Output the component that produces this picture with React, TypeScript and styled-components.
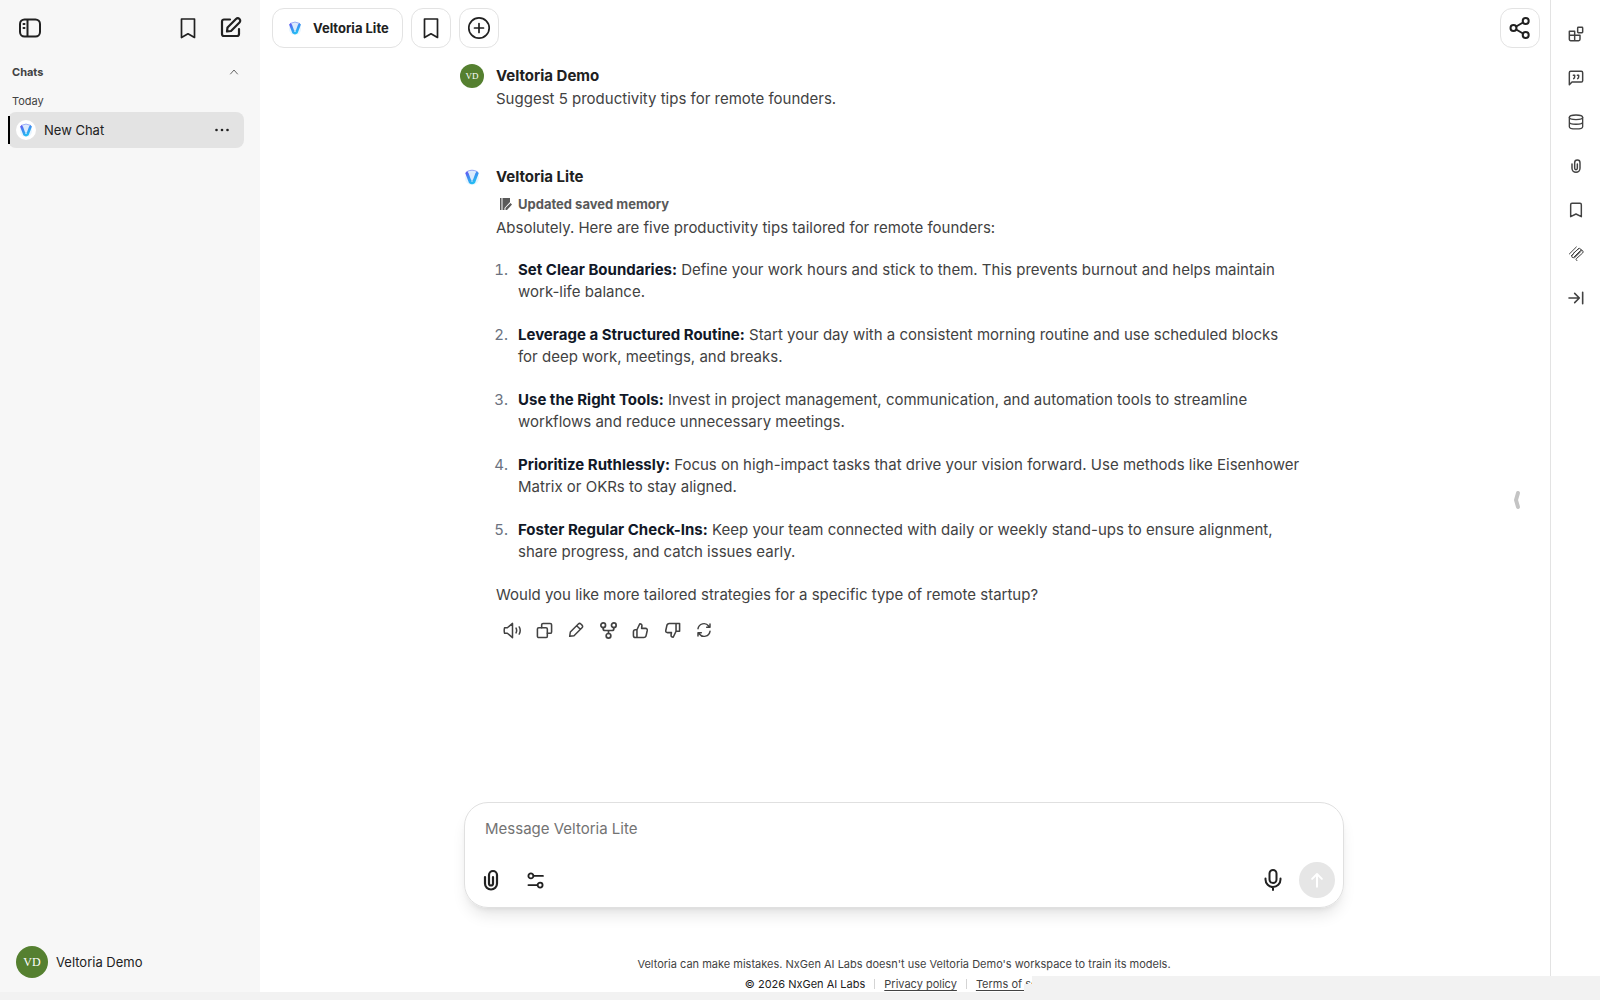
import React from "react";
import styled, { createGlobalStyle } from "styled-components";

const Global = createGlobalStyle`
  *, *::before, *::after { box-sizing: border-box; }
  html, body, #root { height: 100%; margin: 0; }
  body { font-family: Inter, "Liberation Sans", sans-serif; color: #212121; background: #f2f2f2; overflow: hidden; }
  button { font: inherit; color: inherit; border: 0; padding: 0; background: none; cursor: pointer; }
  svg { display: block; flex: none; }
`;

const Page = styled.div`
  height: 100vh;
  padding-bottom: 8px;
  position: relative;
`;
const Shell = styled.div`
  display: flex;
  height: 100%;
  background: #fff;
`;
const Sidebar = styled.nav`
  width: 260px;
  flex: none;
  display: flex;
  flex-direction: column;
  background: #f7f7f7;
`;
const SideTop = styled.div`
  display: flex;
  align-items: center;
  height: 56px;
  padding: 0 17px 0 18px;
  gap: 19px;
`;
const IconButton = styled.button<{ $size?: number; $push?: boolean }>`
  display: flex;
  align-items: center;
  justify-content: center;
  width: ${(p) => p.$size || 24}px;
  height: ${(p) => p.$size || 24}px;
  margin-right: ${(p) => (p.$push ? "auto" : 0)};
`;
const GroupButton = styled.button`
  display: flex;
  align-items: center;
  justify-content: space-between;
  height: 32px;
  padding: 0 20px 0 12px;
  font-size: 11px;
  font-weight: 700;
  color: #424242;
`;
const Period = styled.h2`
  margin: 0;
  padding: 6px 12px 3px;
  font-size: 11px;
  line-height: 15px;
  font-weight: 400;
  color: #424242;
`;
const ChatRow = styled.div`
  display: flex;
  align-items: center;
  height: 36px;
  margin: 0 16px 0 8px;
  padding-right: 14px;
  border-radius: 8px;
  background: #e3e3e3;
  &::before { content: ""; width: 2px; height: 28px; background: #000; margin-right: 6px; }
`;
const ChatLink = styled.a`
  display: flex;
  align-items: center;
  gap: 8px;
  flex: 1;
  font-size: 13px;
  color: #212121;
  text-decoration: none;
`;
const LogoDisc = styled.span`
  display: flex;
  align-items: center;
  justify-content: center;
  width: 20px;
  height: 20px;
  border-radius: 50%;
  background: #fff;
`;
const Account = styled.button`
  display: flex;
  align-items: center;
  gap: 8px;
  margin-top: auto;
  padding: 0 16px 14px;
  font-size: 13px;
`;
const Avatar = styled.span<{ $size: number }>`
  display: flex;
  align-items: center;
  justify-content: center;
  flex: none;
  width: ${(p) => p.$size}px;
  height: ${(p) => p.$size}px;
  border-radius: 50%;
  background: #558030;
  color: #fff;
  font-family: "Liberation Serif", serif;
  font-size: ${(p) => (p.$size > 24 ? 12 : 9)}px;
`;
const Main = styled.main`
  flex: 1;
  min-width: 0;
  display: flex;
  flex-direction: column;
  position: relative;
`;
const TopBar = styled.header`
  display: flex;
  align-items: center;
  gap: 8px;
  height: 56px;
  flex: none;
  padding: 0 10px 0 12px;
`;
const BarButton = styled.button<{ $wide?: boolean; $end?: boolean }>`
  display: flex;
  align-items: center;
  justify-content: center;
  gap: 8px;
  height: 40px;
  width: ${(p) => (p.$wide ? "auto" : "40px")};
  padding: ${(p) => (p.$wide ? "0 13px 0 12px" : "0")};
  margin-left: ${(p) => (p.$end ? "auto" : 0)};
  border: 1px solid #e3e3e3;
  border-radius: 12px;
  background: #fff;
  font-size: 13px;
  font-weight: 700;
`;
const Column = styled.div`
  flex: 1;
  display: flex;
  flex-direction: column;
  padding: 0 22px 0 20px;
`;
const Thread = styled.section`
  flex: 1;
  width: 100%;
  max-width: 888px;
  margin: 0 auto;
  padding-top: 9px;
`;
const Message = styled.article`
  display: grid;
  grid-template-columns: 24px minmax(0, 1fr);
  column-gap: 12px;
  margin-bottom: 56px;
  padding-right: 47px;
`;
const MessageIcon = styled.div`
  display: flex;
  align-items: center;
  justify-content: center;
  height: 22px;
`;
const Author = styled.h3`
  margin: 0;
  font-size: 15px;
  line-height: 22px;
  font-weight: 700;
`;
const Text = styled.p`
  margin: 0;
  font-size: 15px;
  line-height: 23px;
  color: #424242;
`;
const Memory = styled.button`
  display: flex;
  align-items: center;
  gap: 6px;
  height: 20px;
  margin: 6px 0 2px;
  padding-left: 3px;
  font-size: 13px;
  font-weight: 700;
  color: #595959;
`;
const Tips = styled.ol`
  margin: 20px 0;
  padding-left: 16px;
  font-size: 15px;
  line-height: 22px;
  color: #424242;
  li { padding-left: 6px; }
  li + li { margin-top: 21px; }
  li::marker { color: #6b7280; }
  strong { font-weight: 700; color: #111827; }
`;
const Actions = styled.div`
  display: flex;
  gap: 8px;
  margin-top: 12px;
  padding-left: 4px;
  color: #424242;
`;
const Composer = styled.form`
  width: 100%;
  max-width: 880px;
  margin: 0 auto;
  height: 106px;
  flex: none;
  display: flex;
  flex-direction: column;
  justify-content: space-between;
  padding: 12px 8px 9px 14px;
  border: 1px solid #e0e0e0;
  border-radius: 24px;
  box-shadow: 0 10px 15px -3px rgba(0,0,0,.1), 0 4px 6px -4px rgba(0,0,0,.1);
`;
const Prompt = styled.textarea`
  border: 0;
  outline: 0;
  resize: none;
  background: none;
  height: 28px;
  padding: 3px 6px;
  font: 15px/22px Inter, "Liberation Sans", sans-serif;
  &::placeholder { color: #737373; opacity: 1; }
`;
const Tools = styled.div`
  display: flex;
  align-items: center;
  gap: 20px;
`;
const Send = styled.button`
  display: flex;
  align-items: center;
  justify-content: center;
  width: 36px;
  height: 36px;
  border-radius: 50%;
  background: #e6e6e6;
  color: #fff;
`;
const ToolsEnd = styled.div`
  display: flex;
  align-items: center;
  gap: 14px;
  margin-left: auto;
`;
const Footer = styled.footer`
  flex: none;
  height: 84px;
  padding-top: 46px;
  text-align: center;
  font-size: 11px;
  line-height: 20px;
  color: #424242;
`;
const Legal = styled.div`
  display: flex;
  align-items: center;
  justify-content: center;
  color: #212121;
  a { color: #424242; text-underline-offset: 2px; }
`;
const Divider = styled.span`
  width: 1px;
  height: 10px;
  margin: 0 9px;
  background: #d4d4d4;
`;
const Rail = styled.aside`
  width: 50px;
  flex: none;
  display: flex;
  flex-direction: column;
  align-items: center;
  gap: 20px;
  padding-top: 22px;
  border-left: 1px solid #e3e3e3;
  color: #424242;
`;
const PanelHandle = styled.button`
  position: absolute;
  right: 28px;
  top: 490px;
  width: 10px;
  height: 20px;
`;
const StatusBubble = styled.div`
  position: absolute;
  right: 0;
  bottom: 8px;
  width: calc(100% - 1032px);
  height: 16px;
  background: #f2f2f2;
  &::before {
    content: "";
    position: absolute;
    right: 100%;
    bottom: 0;
    width: 8px;
    height: 8px;
    background: #f2f2f2;
  }
`;

type IconProps = { size?: number; w?: number; children: React.ReactNode };
const Icon = ({ size = 24, w = 2, children }: IconProps) => (
  <svg width={size} height={size} viewBox="0 0 24 24" fill="none" stroke="currentColor" strokeWidth={w} strokeLinecap="round" strokeLinejoin="round" aria-hidden="true">
    {children}
  </svg>
);

const Logo = ({ id, size = 16 }: { id: string; size?: number }) => (
  <svg width={size} height={size} viewBox="0 0 16 16" aria-hidden="true">
    <defs>
      <linearGradient id={id} x1="0" y1="0" x2=".6" y2="1">
        <stop offset="0" stopColor="#6a4df5" />
        <stop offset=".45" stopColor="#3f8cf0" />
        <stop offset="1" stopColor="#20c4f4" />
      </linearGradient>
    </defs>
    <circle cx="8" cy="9" r="7" fill="#e9f5ff" />
    <path d="M3 2.600Q8-.2 13 2.600L9.500 14H6.500Z" fill="#dcebfd" />
    <path d="M2.500 2.800Q8-.4 13.500 2.800" fill="none" stroke="#8a9cf3" strokeWidth=".9" />
    <path d="M1.200 4 3.200 2.200 4.600 4.200 6.800 10.200Q8 12.500 9.200 10.200L11.400 4.200 12.800 2.200 14.800 4 11 14Q8 16.600 5 14Z" fill={`url(#${id})`} />
    <path d="M6.800 12.500 8 10.800 9.200 12.500Z" fill="#bfe9fc" />
  </svg>
);

const Clip = ({ size = 24, w = 2 }: { size?: number; w?: number }) => (
  <Icon size={size} w={w}>
    <path d="M6 9v6.500a6 6 0 0 0 12 0V7a4 4 0 0 0-8 0v8.500a2 2 0 0 0 4 0V9" />
  </Icon>
);
const BookmarkShape = () => <path d="M5.500 3h13v18.500L12 17.800 5.500 21.500Z" />;

const tips = [
  ["Set Clear Boundaries:", "Define your work hours and stick to them. This prevents burnout and helps maintain work-life balance."],
  ["Leverage a Structured Routine:", "Start your day with a consistent morning routine and use scheduled blocks for deep work, meetings, and breaks."],
  ["Use the Right Tools:", "Invest in project management, communication, and automation tools to streamline workflows and reduce unnecessary meetings."],
  ["Prioritize Ruthlessly:", "Focus on high-impact tasks that drive your vision forward. Use methods like Eisenhower Matrix or OKRs to stay aligned."],
  ["Foster Regular Check-Ins:", "Keep your team connected with daily or weekly stand-ups to ensure alignment, share progress, and catch issues early."],
];

const actions: [string, React.ReactNode][] = [
  ["Read aloud", <Icon size={19} w={1.9}><path d="M2 8.500h3.500L12 3v18l-6.500-5.500H2Q1 12 2 8.500M16.500 9q1.500 3 0 6M20.500 7.500q2.500 4.500 0 9" /></Icon>],
  ["Copy", <Icon size={17} w={2.2}><rect x="2" y="8" width="14" height="14" rx="2" /><path d="M8 8V4a2 2 0 0 1 2-2h10a2 2 0 0 1 2 2v10a2 2 0 0 1-2 2h-4" /></Icon>],
  ["Edit", <Icon size={16} w={2.2}><path d="M2.500 21.500l1-6.500L15.500 3a2.700 2.700 0 0 1 3.800 0L21 4.700a2.700 2.700 0 0 1 0 3.800L9 20.500ZM13 5.500l5.500 5.500" /></Icon>],
  ["Fork", <Icon size={17} w={2.4}><circle cx="4.500" cy="4.500" r="3.300" /><circle cx="19.500" cy="4.500" r="3.300" /><circle cx="12" cy="19.500" r="3.300" /><path d="M4.500 8v1.500q0 2.500 2.500 2.500h10q2.500 0 2.500-2.500V8M12 12v4" /></Icon>],
  ["Good response", <Icon size={17} w={2.2}><path d="M7 11l4-8.500q3.500 0 3 3.500L13.500 9H19q3 0 2.500 3l-1.500 7q-.6 3-3.500 3H5q-3 0-3-3v-5q0-3 3-3h2v11" /></Icon>],
  ["Bad response", <Icon size={17} w={2.2}><path d="M17 13l-4 8.500q-3.500 0-3-3.500l.5-3H5q-3 0-2.500-3L4 5q.6-3 3.500-3H22v11h-5V2" /></Icon>],
  ["Regenerate", <Icon size={16} w={2.2}><path d="M3 10a9 9 0 0 1 16-4l2 2M21 3v5h-5M21 14a9 9 0 0 1-16 4l-2-2M3 21v-5h5" /></Icon>],
];

const railItems: [string, React.ReactNode][] = [
  ["Builder", <Icon size={16} w={2.2}><path d="M2 8h8v14H4a2 2 0 0 1-2-2ZM2 14h16v6a2 2 0 0 1-2 2h-6M10 14V8" /><rect x="14.500" y="2" width="7.500" height="8" rx="1" /></Icon>],
  ["Prompts", <Icon size={16} w={2.2}><path d="M2 22V4a2 2 0 0 1 2-2h16a2 2 0 0 1 2 2v12a2 2 0 0 1-2 2H6ZM8 8h2v2q0 2-1.500 3M14 8h2v2q0 2-1.500 3" /></Icon>],
  ["Memories", <Icon size={16}><ellipse cx="12" cy="5" rx="10" ry="3.500" /><path d="M2 5v14c0 4.500 20 4.500 20 0V5M2 12c0 4.500 20 4.500 20 0" /></Icon>],
  ["Attach files", <Clip size={16} w={2.2} />],
  ["Bookmarks", <Icon size={16} w={2.2}><path d="M4 22V4q0-2 2-2h12q2 0 2 2v18l-8-4Z" /></Icon>],
  ["Integrations", <Icon size={16} w={1.5}><path d="M2 12 12.500 1.500M5 14.500 15 4.500q2-2 4 0t0 4L10 17.500M8 11l8-7M9 16.500 18.500 7q2-2 3.500 0t0 3.500L12.500 19q-1 1 0 2l1 1M8 12l-2.500 3q0 3 3 2.500L17 9.500" /></Icon>],
  ["Hide panel", <Icon size={16} w={2.4}><path d="M1.500 12H17M10 5l7 7-7 7M22 3.500v17" /></Icon>],
];

export default function App() {
  return (
    <Page>
      <Global />
      <Shell>
        <Sidebar aria-label="Chats">
          <SideTop>
            <IconButton $push aria-label="Close sidebar">
              <Icon><rect x="2" y="3.500" width="20" height="17" rx="4.500" /><path d="M9.500 4v16M5.500 8h1M5.500 12h1" /></Icon>
            </IconButton>
            <IconButton aria-label="Bookmarks"><Icon w={1.7}><BookmarkShape /></Icon></IconButton>
            <IconButton aria-label="New chat">
              <Icon w={2.2}><path d="M11 3.500H5a2 2 0 0 0-2 2V18a2 2 0 0 0 2 2h13a2 2 0 0 0 2-2v-5M8.500 11.500l8.500-8.500a2.400 2.400 0 0 1 3.500 3.500L12 15l-4 .5Z" /></Icon>
            </IconButton>
          </SideTop>
          <GroupButton>Chats<Icon size={12} w={1.6}><path d="m5 16 7-8 7 8" /></Icon></GroupButton>
          <Period>Today</Period>
          <ChatRow>
            <ChatLink href="#chat"><LogoDisc><Logo id="logo-row" size={14} /></LogoDisc>New Chat</ChatLink>
            <IconButton $size={16} aria-label="Chat options">
              <svg width="16" height="16" viewBox="0 0 16 16" fill="#212121" aria-hidden="true"><circle cx="2.500" cy="8" r="1.300" /><circle cx="8" cy="8" r="1.300" /><circle cx="13.500" cy="8" r="1.300" /></svg>
            </IconButton>
          </ChatRow>
          <Account><Avatar $size={32}>VD</Avatar>Veltoria Demo</Account>
        </Sidebar>

        <Main>
          <TopBar>
            <BarButton $wide><LogoDisc><Logo id="logo-bar" size={14} /></LogoDisc>Veltoria Lite</BarButton>
            <BarButton aria-label="Bookmark chat"><Icon w={1.7}><BookmarkShape /></Icon></BarButton>
            <BarButton aria-label="Add conversation"><Icon w={1.7}><circle cx="12" cy="12" r="10.200" /><path d="M12 7.500v9M7.500 12h9" /></Icon></BarButton>
            <BarButton $end aria-label="Share"><Icon><circle cx="5.500" cy="12" r="3" /><circle cx="17.700" cy="5" r="3" /><circle cx="17.700" cy="19" r="3" /><path d="m8.200 10.500 6.800-4M8.200 13.500l6.800 4" /></Icon></BarButton>
          </TopBar>

          <Column>
            <Thread>
              <Message>
                <MessageIcon><Avatar $size={24}>VD</Avatar></MessageIcon>
                <div>
                  <Author>Veltoria Demo</Author>
                  <Text>Suggest 5 productivity tips for remote founders.</Text>
                </div>
              </Message>
              <Message>
                <MessageIcon><Logo id="logo-msg" /></MessageIcon>
                <div>
                  <Author>Veltoria Lite</Author>
                  <Memory>
                    <svg width="13" height="14" viewBox="0 0 13 14" fill="#595959" aria-hidden="true"><path d="M1 1h1.500v12H1ZM3.500 1H11v4L5.500 11v2H3.500ZM6.500 11l5-5 1.500 1.500-5 5.500H6.500Z" /></svg>
                    Updated saved memory
                  </Memory>
                  <Text>Absolutely. Here are five productivity tips tailored for remote founders:</Text>
                  <Tips>
                    {tips.map(([title, body]) => <li key={title}><strong>{title}</strong> {body}</li>)}
                  </Tips>
                  <Text>Would you like more tailored strategies for a specific type of remote startup?</Text>
                  <Actions>
                    {actions.map(([label, icon]) => <IconButton key={label} aria-label={label}>{icon}</IconButton>)}
                  </Actions>
                </div>
              </Message>
            </Thread>

            <Composer>
              <Prompt aria-label="Message" placeholder="Message Veltoria Lite" rows={1} />
              <Tools>
                <IconButton type="button" aria-label="Attach files"><Clip w={2.2} /></IconButton>
                <IconButton type="button" aria-label="Tools"><Icon size={17} w={2.6}><circle cx="5.500" cy="5.500" r="3.500" /><path d="M10 5.500h12.500M2 18.500h12" /><circle cx="18.500" cy="18.500" r="3.500" /></Icon></IconButton>
                <ToolsEnd>
                  <IconButton type="button" aria-label="Use microphone"><Icon><rect x="8.500" y="2" width="7" height="13" rx="3.500" /><path d="M4.500 10.500v1a7.500 7.500 0 0 0 15 0v-1M12 19v3" /></Icon></IconButton>
                  <Send type="button" disabled aria-label="Send message"><Icon size={18} w={2.6}><path d="M12 21V4M5.500 10.500 12 4l6.500 6.500" /></Icon></Send>
                </ToolsEnd>
              </Tools>
            </Composer>
            <Footer>
              <div>Veltoria can make mistakes. NxGen AI Labs doesn't use Veltoria Demo's workspace to train its models.</div>
              <Legal>© 2026 NxGen AI Labs<Divider /><a href="#privacy">Privacy policy</a><Divider /><a href="#terms">Terms of service</a></Legal>
            </Footer>
          </Column>
          <PanelHandle aria-label="Open panel">
            <svg width="10" height="20" viewBox="0 0 10 20" fill="none" stroke="#c4c4c4" strokeWidth="4" strokeLinecap="round" strokeLinejoin="round" aria-hidden="true"><path d="M6 3 4 10l2 7" /></svg>
          </PanelHandle>
        </Main>

        <Rail aria-label="Tools">
          {railItems.map(([label, icon]) => <IconButton key={label} aria-label={label}>{icon}</IconButton>)}
        </Rail>
      </Shell>
      <StatusBubble />
    </Page>
  );
}
